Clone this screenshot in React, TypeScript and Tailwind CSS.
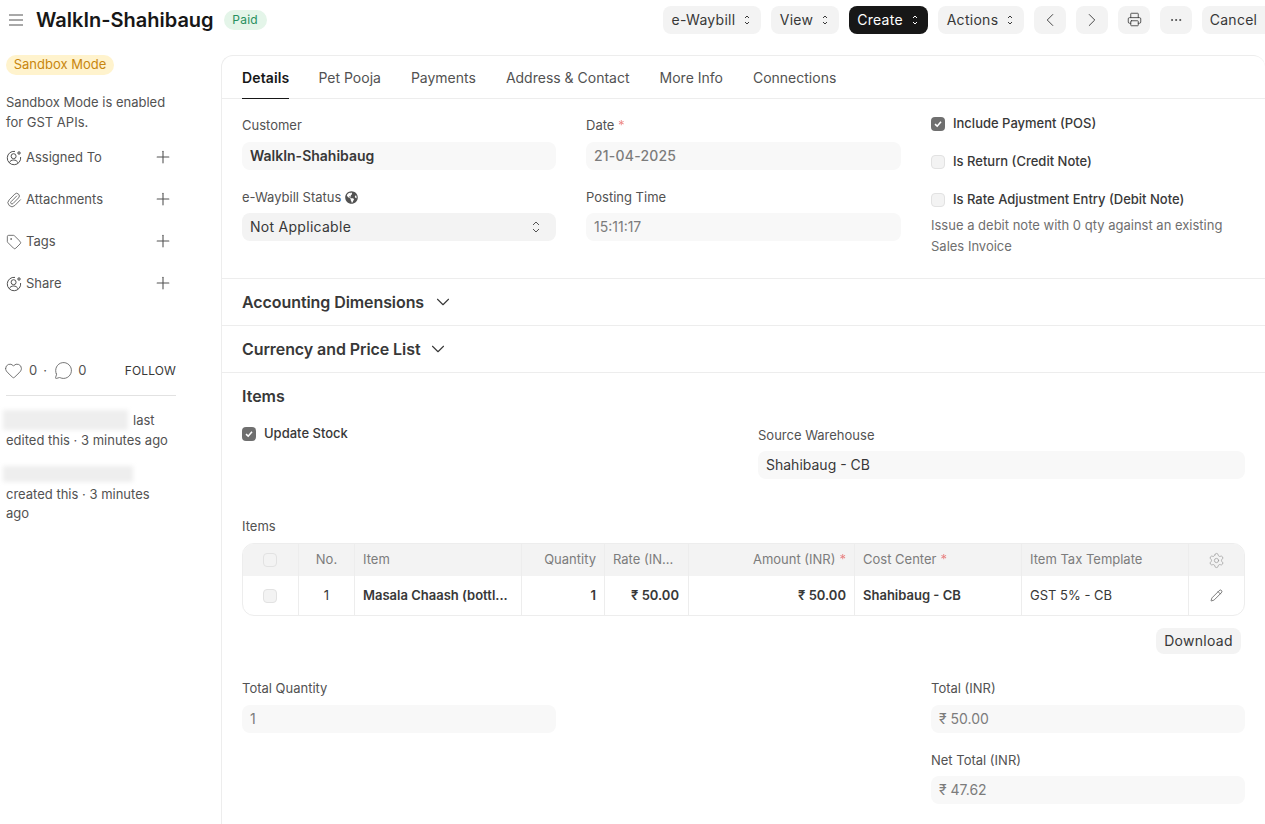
import { ChevronDown, ChevronLeft, ChevronRight, Ellipsis, Heart, MessageCircle, Paperclip, Pencil, Plus, Printer, Settings, Tag } from "lucide-react";
import { FaGlobeAmericas } from "react-icons/fa";
import type { ReactNode } from "react";

const UpDown = () => (
    <svg width="10" height="12" viewBox="0 0 10 12" fill="none" stroke="currentColor" strokeWidth="1">
        <path d="M3 4 L5 2 L7 4" />
        <path d="M3 8 L5 10 L7 8" />
    </svg>
);

const UserPlus = () => (
    <svg width="16" height="16" viewBox="0 0 16 16" fill="none" stroke="#525252" strokeWidth="1" className="shrink-0">
        <path d="M9 1.4 A6.7 6.7 0 1 0 14.6 7" />
        <circle cx="7.6" cy="6.2" r="2.5" />
        <path d="M3.3 12.8 C4 10.8 5.6 10 7.6 10 C9.6 10 11.2 10.8 11.9 12.8" />
        <path d="M13 1 V5 M11 3 H15" />
    </svg>
);

const Btn = ({ children, className = "" }: { children: ReactNode; className?: string }) => (
    <div className={`h-7 pb-px rounded-lg bg-[#f3f3f3] text-[#383838] flex items-center justify-center text-[14px] tracking-[0.02em] ${className}`}>
        {children}
    </div>
);

const Check = ({ checked = false }: { checked?: boolean }) =>
    checked ? (
        <div className="w-3.5 h-3.5 rounded bg-[#6f6f6f] flex items-center justify-center shrink-0">
            <svg width="10" height="10" viewBox="0 0 10 10" fill="none" stroke="#fff" strokeWidth="1.6">
                <path d="M2 5.2 L4.2 7.2 L8 2.8" />
            </svg>
        </div>
    ) : (
        <div className="w-3.5 h-3.5 rounded bg-[#f3f3f3] border border-[#e2e2e2] shrink-0"></div>
    );

const Label = ({ children, className = "" }: { children: ReactNode; className?: string }) => (
    <div className={`h-[18px] leading-[18px] text-[13px] text-[#525252] ${className}`}>{children}</div>
);

const Input = ({ children, className = "" }: { children: ReactNode; className?: string }) => (
    <div className={`h-7 pb-px rounded-lg bg-[#f8f8f8] px-2 flex items-center text-[14px] ${className}`}>{children}</div>
);

const SideRow = ({ icon, text }: { icon: ReactNode; text: string }) => (
    <div className="h-[42px] flex items-center w-[170px] text-[13px] text-[#525252]">
        <div className="w-5 flex items-center">{icon}</div>
        <span>{text}</span>
        <Plus size={20} strokeWidth={1.3} className="ml-auto mr-[3px] -mt-[2px] text-[#525252]" />
    </div>
);

const Tab = ({ text, active = false }: { text: string; active?: boolean }) => (
    <div className={`h-[43px] flex items-center text-[14px] ${active ? "font-semibold text-[#171717] border-b border-[#171717] tracking-[0.01em] -mr-px" : "text-[#525252]"}`}>
        {text}
    </div>
);

const Cell = ({ children, className = "" }: { children?: ReactNode; className?: string }) => (
    <div className={`flex items-center px-2 border-r border-[#ededed] last:border-r-0 overflow-hidden whitespace-nowrap ${className}`}>{children}</div>
);

const Collapse = ({ title, chevron }: { title: string; chevron: string }) => (
    <div className="h-[47px] border-b border-[#ededed] px-5 flex items-center text-[16px] font-semibold text-[#383838] tracking-[-0.005em]">
        {title}
        <ChevronDown size={22} strokeWidth={1.2} className={`text-[#383838] ${chevron}`} />
    </div>
);

const App = () => {
    return (
        <div className="w-[1265px] h-[824px] overflow-hidden bg-white text-[#171717]" style={{ fontFamily: "Inter, sans-serif" }}>
            {/* top bar */}
            <div className="h-[55px] flex items-start pt-1.5">
                <div className="h-7 flex items-center pl-[8px] w-9">
                    <svg width="16" height="14" viewBox="0 0 16 14" stroke="#525252" strokeWidth="1">
                        <path d="M1 2 H15 M1 7 H15 M1 12 H15" />
                    </svg>
                </div>
                <div className="h-7 flex items-center text-[20px] font-semibold text-[#171717]">WalkIn-Shahibaug</div>
                <div className="ml-[10px] mt-1 h-5 w-[43px] rounded-full bg-[#e4f5e9] text-[#278f5e] text-[12px] tracking-[0.02em] flex items-center justify-center">Paid</div>
                <div className="ml-auto flex gap-2.5">
                    <Btn className="w-[98px] gap-[7px]">e-Waybill <UpDown /></Btn>
                    <Btn className="w-[68px] gap-[7px]">View <UpDown /></Btn>
                    <Btn className="w-[79px] gap-[7px] !bg-[#171717] !text-white">Create <UpDown /></Btn>
                    <Btn className="w-[86px] gap-[7px]">Actions <UpDown /></Btn>
                    <Btn className="w-8"><ChevronLeft size={22} strokeWidth={1} /></Btn>
                    <Btn className="w-8"><ChevronRight size={22} strokeWidth={1} /></Btn>
                    <Btn className="w-8"><Printer size={15} strokeWidth={1.3} /></Btn>
                    <Btn className="w-8"><Ellipsis size={14} strokeWidth={1.4} /></Btn>
                    <Btn className="w-[63px] rounded-r-none">Cancel</Btn>
                </div>
            </div>

            <div className="flex h-[769px]">
                {/* sidebar */}
                <div className="w-[221px] shrink-0 pl-1.5">
                    <div className="h-5 w-[108px] rounded-full bg-[#fff3cd] text-[#c8860d] text-[13px] flex items-center justify-center">Sandbox Mode</div>
                    <div className="mt-[17px] text-[13px] leading-[20px] text-[#525252]">
                        Sandbox Mode is enabled<br />for GST APIs.
                    </div>
                    <div className="mt-[5px]">
                        <SideRow icon={<UserPlus />} text="Assigned To" />
                        <SideRow icon={<Paperclip size={16} strokeWidth={1.2} color="#525252" />} text="Attachments" />
                        <SideRow icon={<Tag size={16} strokeWidth={1.2} color="#525252" />} text="Tags" />
                        <SideRow icon={<UserPlus />} text="Share" />
                    </div>
                    <div className="mt-[54px] w-[170px] h-[24px] flex items-center text-[13px] text-[#525252]">
                        <Heart size={19} strokeWidth={1} className="-ml-[2px] mr-[6px] -mt-[2px]" />
                        <span>0</span>
                        <span className="w-[16px] text-center">·</span>
                        <MessageCircle size={19} strokeWidth={1} className="mr-[5px] ml-px -mt-[2px]" />
                        <span>0</span>
                        <span className="ml-auto -mt-px text-[12px] text-[#383838] tracking-[0.01em]">FOLLOW</span>
                    </div>
                    <div className="mt-3 w-[170px] border-t border-[#e2e2e2]"></div>
                    <div className="mt-[14px] text-[13px] leading-[20px] text-[#525252] w-[172px]">
                        <div className="h-5 flex">
                            <div className="-ml-[3px] w-[125px] h-5 bg-[#eeeeee] blur-[2px]"></div>
                            <span className="ml-[5px]">last</span>
                        </div>
                        <div>edited this · 3 minutes ago</div>
                    </div>
                    <div className="mt-[16px] text-[13px] leading-[19px] text-[#525252] w-[172px]">
                        <div className="-ml-[3px] w-[130px] h-4 bg-[#eeeeee] blur-[2px] mb-[3px]"></div>
                        <div>created this · 3 minutes<br />ago</div>
                    </div>
                </div>

                {/* main card */}
                <div className="flex-1 min-w-0 border-t border-l border-[#ededed] rounded-tl-xl rounded-tr-xl">
                    <div className="h-[42px] box-content border-b border-[#ededed] px-5 flex gap-[30px]">
                        <Tab text="Details" active />
                        <Tab text="Pet Pooja" />
                        <Tab text="Payments" />
                        <Tab text="Address & Contact" />
                        <Tab text="More Info" />
                        <Tab text="Connections" />
                    </div>

                    {/* customer section */}
                    <div className="h-[180px] border-b border-[#ededed] px-5 pt-[17px] grid grid-cols-[314px_315px_314px] gap-x-[30px]">
                        <div>
                            <Label className="mb-2">Customer</Label>
                            <Input className="font-semibold text-[#383838]">WalkIn-Shahibaug</Input>
                            <Label className="mt-[18px] mb-[7px] flex items-center gap-1">
                                e-Waybill Status <FaGlobeAmericas size={13} className="text-[#525252]" />
                            </Label>
                            <Input className="!bg-[#f3f3f3] text-[#383838] justify-between pr-[15px] tracking-[0.02em]">
                                Not Applicable
                                <svg width="10" height="14" viewBox="0 0 10 14" fill="none" stroke="#525252" strokeWidth="1">
                                    <path d="M2 5 L5 2 L8 5" />
                                    <path d="M2 9 L5 12 L8 9" />
                                </svg>
                            </Input>
                        </div>
                        <div>
                            <Label className="mb-2">Date <span className="text-[#e03636] opacity-60">*</span></Label>
                            <Input className="font-medium text-[#7c7c7c] tracking-[0.015em]">21-04-2025</Input>
                            <Label className="mt-[18px] mb-[7px]">Posting Time</Label>
                            <Input className="text-[#7c7c7c]">15:11:17</Input>
                        </div>
                        <div className="-mt-[1px]">
                            <div className="h-[18px] flex items-center gap-2 text-[13px] font-medium text-[#383838]"><Check checked /> Include Payment (POS)</div>
                            <div className="mt-[20px] h-[18px] flex items-center gap-2 text-[13px] font-medium text-[#383838]"><Check /> Is Return (Credit Note)</div>
                            <div className="mt-[20px] h-[18px] flex items-center gap-2 text-[13px] font-medium text-[#383838]"><Check /> Is Rate Adjustment Entry (Debit Note)</div>
                            <div className="mt-[6px] text-[13px] leading-[21px] text-[#6f6f6f]">Issue a debit note with 0 qty against an existing Sales Invoice</div>
                        </div>
                    </div>

                    <Collapse title="Accounting Dimensions" chevron="ml-2" />
                    <Collapse title="Currency and Price List" chevron="ml-[7px]" />

                    {/* items */}
                    <div className="px-5">
                        <div className="h-[45px] flex items-center text-[16px] font-semibold text-[#383838]">Items</div>
                        <div className="flex">
                            <div className="w-[516px] h-[28px] flex items-start gap-2 text-[13px] font-medium text-[#383838]">
                                <div className="flex items-center gap-2 h-[18px] mt-[7px]"><Check checked /> Update Stock</div>
                            </div>
                            <div className="flex-1 pt-[8px]">
                                <Label className="mb-[7px]">Source Warehouse</Label>
                                <Input className="text-[#383838]">Shahibaug - CB</Input>
                            </div>
                        </div>

                        <Label className="mt-[38px] mb-[8px] text-[#383838]">Items</Label>
                        <div className="border border-[#ededed] rounded-xl overflow-hidden text-[13px] w-[1003px]">
                            <div className="h-[32px] bg-[#f3f3f3] grid grid-cols-[56px_56px_167px_83px_84px_166px_167px_167px_55px] text-[#7c7c7c]">
                                <Cell className="justify-center !pr-[10px]"><Check /></Cell>
                                <Cell className="justify-center">No.</Cell>
                                <Cell>Item</Cell>
                                <Cell className="justify-end">Quantity</Cell>
                                <Cell>Rate (IN...</Cell>
                                <Cell className="justify-end gap-1">Amount (INR) <span className="text-[#e03636] opacity-60">*</span></Cell>
                                <Cell className="gap-1">Cost Center <span className="text-[#e03636] opacity-60">*</span></Cell>
                                <Cell>Item Tax Template</Cell>
                                <Cell className="justify-center"><Settings size={17} strokeWidth={1} className="text-[#999999]" /></Cell>
                            </div>
                            <div className="h-[39px] grid grid-cols-[56px_56px_167px_83px_84px_166px_167px_167px_55px] text-[#383838]">
                                <Cell className="justify-center !pr-[10px]"><Check /></Cell>
                                <Cell className="justify-center">1</Cell>
                                <Cell className="font-semibold">Masala Chaash (bottl...</Cell>
                                <Cell className="justify-end font-semibold">1</Cell>
                                <Cell className="justify-end font-semibold !pr-[9px]">₹ 50.00</Cell>
                                <Cell className="justify-end font-semibold">₹ 50.00</Cell>
                                <Cell className="font-semibold">Shahibaug - CB</Cell>
                                <Cell>GST 5% - CB</Cell>
                                <Cell className="justify-center"><Pencil size={13} strokeWidth={1.2} className="text-[#383838]" /></Cell>
                            </div>
                        </div>
                        <div className="flex justify-end mt-[12px] pr-1">
                            <Btn className="w-[85px] !h-[26px]">Download</Btn>
                        </div>

                        <div className="mt-[25px] grid grid-cols-[314px_315px_314px] gap-x-[30px]">
                            <div>
                                <Label className="mb-2">Total Quantity</Label>
                                <Input className="text-[#7c7c7c]">1</Input>
                            </div>
                            <div></div>
                            <div>
                                <Label className="mb-2">Total (INR)</Label>
                                <Input className="text-[#7c7c7c]">₹ 50.00</Input>
                                <Label className="mt-[18px] mb-[7px]">Net Total (INR)</Label>
                                <Input className="text-[#7c7c7c]">₹ 47.62</Input>
                            </div>
                        </div>
                    </div>
                </div>
            </div>
        </div>
    );
};

export default App;
